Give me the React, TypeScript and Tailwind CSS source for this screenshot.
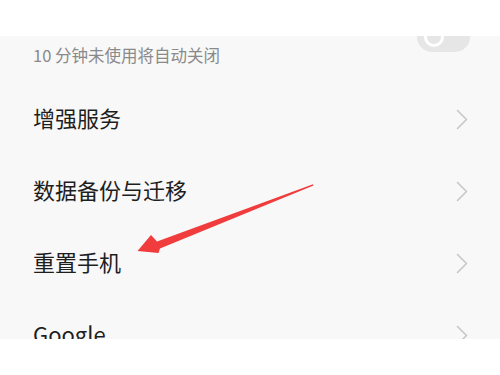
import React from "react";

function Chevron() {
  return (
    <svg width="12" height="21" viewBox="0 0 12 21" fill="none" className="shrink-0">
      <polyline points="1.5,1.5 10.5,10.5 1.5,19.5" stroke="#c7c7c7" strokeWidth="1.6" strokeLinecap="round" strokeLinejoin="round" fill="none" />
    </svg>
  );
}

function Row({ label }: { label: string }) {
  return (
    <div className="h-[72px] flex items-center justify-between pl-[33px] pr-[32px] shrink-0">
      <span className="text-[22px] leading-[30px] pb-[4px] text-[#1e1e1e]">{label}</span>
      <Chevron />
    </div>
  );
}

export default function App() {
  return (
    <div className="w-[500px] h-[375px] bg-white flex flex-col overflow-hidden relative font-['Noto_Sans_CJK_SC','Noto_Sans',sans-serif]">
      <div className="h-[36px] bg-white shrink-0 relative z-10" />
      <div className="h-[303px] bg-[#f8f8f8] flex flex-col shrink-0 overflow-hidden">
        <div className="flex items-start justify-between pl-[33px] pr-[30px] shrink-0">
          <span className="pt-[9px] text-[16.5px] leading-[20px] text-[#8a8a8a]">10 分钟未使用将自动关闭</span>
          <div className="w-[53px] h-[30px] mt-[-14px] rounded-full bg-[#e6e6e6] flex items-center pl-[7px]">
            <div className="w-[20px] h-[20px] rounded-full border-[3px] border-white bg-[#e6e6e6]" />
          </div>
        </div>
        <div className="h-[18px] shrink-0" />
        <Row label="增强服务" />
        <Row label="数据备份与迁移" />
        <Row label="重置手机" />
        <Row label="Google" />
      </div>
      <div className="flex-1 bg-white relative z-10" />
      <svg className="absolute left-0 top-0 pointer-events-none" width="500" height="375" viewBox="0 0 500 375">
        <polygon
          points="137.5,251 151,235 157,241.5 313,184.3 313.5,185.5 160,248.5 158.5,253"
          fill="#f03c3c"
        />
      </svg>
    </div>
  );
}
